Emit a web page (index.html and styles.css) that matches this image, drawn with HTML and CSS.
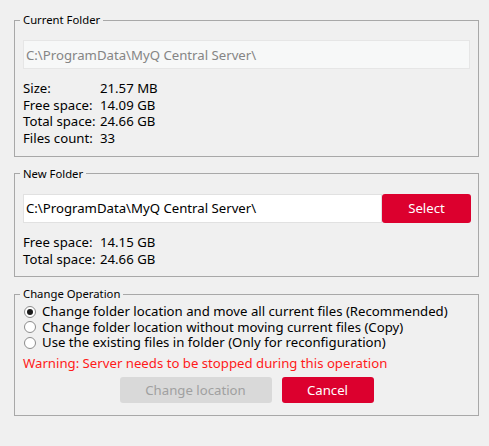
FILE: index.html
```html
<!DOCTYPE html>
<html lang="en">
<head>
  <meta charset="UTF-8" />
  <title>Change Data Folder</title>
  <link rel="stylesheet" href="styles.css">
</head>
<body>

  <div class="dialog">

    <!-- Current folder -->
    <fieldset class="group">
      <legend>Current Folder</legend>
      <input class="path path-readonly" type="text" value="C:\ProgramData\MyQ Central Server\" readonly />
      <div class="stats">
        <span>Size:</span><span>21.57 MB</span>
        <span>Free space:</span><span>14.09 GB</span>
        <span>Total space:</span><span>24.66 GB</span>
        <span>Files count:</span><span>33</span>
      </div>
    </fieldset>

    <!-- New folder -->
    <fieldset class="group">
      <legend>New Folder</legend>
      <div class="path-row">
        <input class="path" type="text" value="C:\ProgramData\MyQ Central Server\" />
        <button class="btn btn-red btn-select">Select</button>
      </div>
      <div class="stats">
        <span>Free space:</span><span>14.15 GB</span>
        <span>Total space:</span><span>24.66 GB</span>
      </div>
    </fieldset>

    <!-- Operation -->
    <fieldset class="group group-op">
      <legend>Change Operation</legend>
      <label class="radio"><input type="radio" name="op" checked /> Change folder location and move all current files (Recommended)</label>
      <label class="radio"><input type="radio" name="op" /> Change folder location without moving current files (Copy)</label>
      <label class="radio"><input type="radio" name="op" /> Use the existing files in folder (Only for reconfiguration)</label>
      <p class="warning">Warning: Server needs to be stopped during this operation</p>
      <div class="actions">
        <button class="btn btn-disabled" disabled>Change location</button>
        <button class="btn btn-red btn-cancel">Cancel</button>
      </div>
    </fieldset>

  </div>

</body>
</html>
```

FILE: styles.css
```css
* {
  box-sizing: border-box;
  margin: 0;
  padding: 0;
}

body {
  background: #f0f0f0;
  font-family: 'Noto Sans', sans-serif;
  font-size: 13.2px;
  color: #000;
}

.dialog {
  width: 489px;
  height: 446px;
  padding: 13px 10px 0 14px;
  display: flex;
  flex-direction: column;
  gap: 10px;
}

.group {
  border: 1px solid #a8a8a8;
  padding: 13px 8px 9px 8px;
}

.group legend {
  margin-left: -3px;
  padding: 0 3px;
  line-height: 14px;
  font-size: 11.3px;
}

.path {
  display: block;
  width: 100%;
  height: 29px;
  font: inherit;
  padding: 0 2px;
  border: 1px solid #e1e1e1;
  background: #fff;
  color: #000;
  outline: none;
}

.path-readonly {
  background: #f7f8f8;
  color: #858585;
  border-color: #e6e6e6;
}

.stats {
  display: grid;
  grid-template-columns: 77px auto;
  justify-content: start;
  line-height: 16.7px;
  margin-top: 11px;
}

.path-row {
  display: flex;
}

.path-row .path {
  flex: 1;
}

.btn {
  font: inherit;
  border: none;
  border-radius: 3px;
  height: 26px;
  cursor: pointer;
}

.btn-red {
  background: #dc002e;
  color: #fff;
}

.btn-select {
  width: 89px;
  height: 29px;
  margin-right: -1px;
}

.group-op {
  padding-top: 3px;
  padding-bottom: 12px;
}

.radio {
  display: flex;
  align-items: center;
  gap: 6px;
  line-height: 15.5px;
  margin-left: 1px;
}

.radio input {
  appearance: none;
  width: 12px;
  height: 12px;
  margin: 0;
  border: 1px solid #8c8c8c;
  border-radius: 50%;
  background: #fff;
  display: grid;
  place-items: center;
}

.radio input:checked::before {
  content: "";
  width: 6px;
  height: 6px;
  border-radius: 50%;
  background: #1a1a1a;
}

.warning {
  color: #ff1a1a;
  margin-top: 3px;
  line-height: 18px;
}

.actions {
  display: flex;
  justify-content: center;
  gap: 10px;
  margin-top: 5px;
}

.btn-disabled {
  width: 152px;
  background: #d9d9d9;
  color: #a0a0a0;
  cursor: default;
}

.btn-cancel {
  width: 92px;
}
```
